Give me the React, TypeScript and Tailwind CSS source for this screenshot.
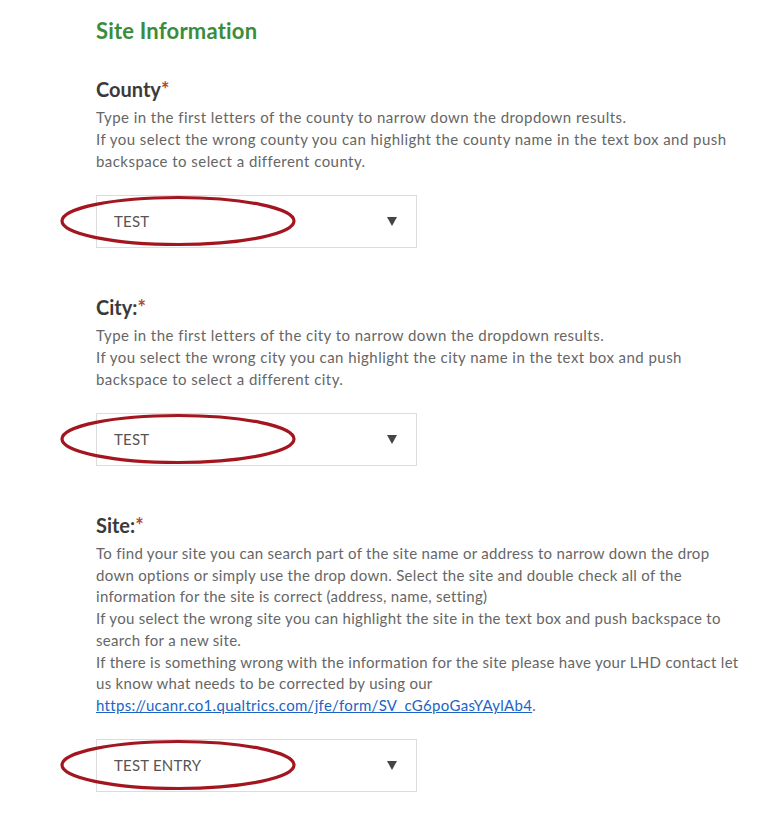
import React from "react";

function Circled() {
  return (
    <svg
      className="pointer-events-none absolute -left-9 top-0 h-[52px] w-[238px]"
      viewBox="0 0 238 52"
      aria-hidden
    >
      <ellipse cx="118" cy="26" rx="116" ry="23.5" fill="none" stroke="#a3161f" strokeWidth="3.2" />
    </svg>
  );
}

function Dropdown({ value }: { value: string }) {
  return (
    <div className="relative w-[321px]">
      <div className="flex h-[53px] items-center justify-between border border-[#dcdcdc] bg-white pl-[17px] pr-[19px]">
        <span className="text-[15px] tracking-[0.2px] text-[#555]">{value}</span>
        <svg className="h-[9px] w-[10px]" viewBox="0 0 10 9" aria-hidden>
          <path d="M0 0 H10 L5 9 Z" fill="#454545" />
        </svg>
      </div>
      <Circled />
    </div>
  );
}

function Label({ text }: { text: string }) {
  return (
    <h3 className="text-[20px] font-bold leading-none text-[#3a3a3a]">
      {text}
      <span className="text-[#b5472a]">*</span>
    </h3>
  );
}

export default function App() {
  return (
    <div className="min-h-[821px] bg-white font-['Lato','Noto_Sans',sans-serif]">
      <div className="pl-[96px] pt-[19px]">
        <h2 className="text-[22px] font-bold leading-6 tracking-[0.2px] text-[#3a8d3a]">Site Information</h2>

        <section className="mt-[36px]">
          <Label text="County" />
          <p className="mt-[7px] w-[650px] text-[15px] leading-[22px] tracking-[0.45px] text-[#666]">
            Type in the first letters of the county to narrow down the dropdown results.
            <br />
            If you select the wrong county you can highlight the county name in the text box and push
            backspace to select a different county.
          </p>
          <div className="mt-[23px]">
            <Dropdown value="TEST" />
          </div>
        </section>

        <section className="mt-[49px]">
          <Label text="City:" />
          <p className="mt-[7px] w-[650px] text-[15px] leading-[22px] tracking-[0.45px] text-[#666]">
            Type in the first letters of the city to narrow down the dropdown results.
            <br />
            If you select the wrong city you can highlight the city name in the text box and push
            backspace to select a different city.
          </p>
          <div className="mt-[23px]">
            <Dropdown value="TEST" />
          </div>
        </section>

        <section className="mt-[49px]">
          <Label text="Site:" />
          <p className="mt-[8px] w-[648px] text-[15px] leading-[21.7px] tracking-[0.3px] text-[#666]">
            To find your site you can search part of the site name or address to narrow down the drop
            down options or simply use the drop down. Select the site and double check all of the
            information for the site is correct (address, name, setting)
            <br />
            If you select the wrong site you can highlight the site in the text box and push backspace to
            search for a new site.
            <br />
            If there is something wrong with the information for the site please have your LHD contact let
            us know what needs to be corrected by using our{" "}
            <a
              href="https://ucanr.co1.qualtrics.com/jfe/form/SV_cG6poGasYAylAb4"
              className="text-[#1b64c4] underline"
            >
              https://ucanr.co1.qualtrics.com/jfe/form/SV_cG6poGasYAylAb4
            </a>
            .
          </p>
          <div className="mt-[22px]">
            <Dropdown value="TEST ENTRY" />
          </div>
        </section>
      </div>
    </div>
  );
}
